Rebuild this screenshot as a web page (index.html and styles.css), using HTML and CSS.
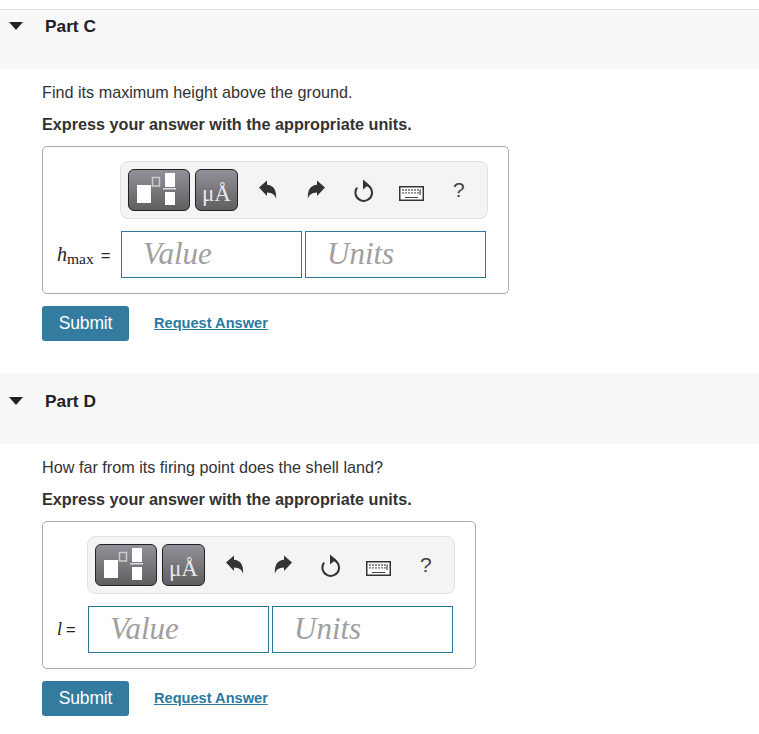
FILE: index.html
```html
<!DOCTYPE html>
<html lang="en">
<head>
<meta charset="utf-8">
<title>Parts</title>
<link rel="stylesheet" href="styles.css">
</head>
<body>
<svg class="defs" width="0" height="0" aria-hidden="true">
  <defs>
    <symbol id="undo" viewBox="0 0 18 19"><path d="M0 7.500 8 .5v4.300c5.500.3 9.800 3.800 9.100 14.200-1-4.400-4-6.500-9.100-6.600v3.700z"/></symbol>
    <symbol id="redo" viewBox="0 0 18 19"><path d="M18 7.500 10 .5v4.300C4.500 5.100.2 8.600.9 19c1-4.400 4-6.500 9.100-6.600v3.700z"/></symbol>
    <symbol id="reset" viewBox="0 0 20 23"><path d="M9.500 5.300a8.300 8.300 0 1 1-6.400 3.300" fill="none" stroke="#333" stroke-width="2"/><path d="M9 .5v10l6-5z" fill="#333"/></symbol>
    <symbol id="keys" viewBox="0 0 25 15"><rect x=".75" y=".75" width="23.500" height="13.500" fill="#fff" stroke="#333" stroke-width="1.500"/><path d="M3 4h19M3 6.800h19" stroke="#666" stroke-width="1.300" stroke-dasharray="2 1"/><path d="M21 4v5" stroke="#666" stroke-width="1.300"/><path d="M6 11.500h13" stroke="#444"/></symbol>
    <symbol id="templates" viewBox="0 0 62 42"><rect x="9" y="16" width="14" height="18" fill="#fff"/><rect x="24.500" y="8.500" width="7" height="8.500" fill="none" stroke="#ccc" stroke-width="1.500"/><rect x="37" y="4" width="10" height="14" fill="#fff"/><rect x="35" y="19" width="13" height="1.500" fill="#ddd"/><rect x="37" y="23" width="10" height="13" fill="#fff"/></symbol>
  </defs>
</svg>

<section class="part part-first">
  <header class="part-head part-head-first">
    <svg class="caret" viewBox="0 0 14 8"><path d="M0 0h14L7 8z"/></svg>
    <h2 class="part-title">Part C</h2>
  </header>
  <div class="part-body">
    <p class="prompt">Find its maximum height above the ground.</p>
    <p class="instruction">Express your answer with the appropriate units.</p>
    <div class="answer-box">
      <div class="toolbar">
        <span class="tool tool-templates"><svg class="tool-svg"><use href="#templates"/></svg></span>
        <span class="tool tool-symbols"><span class="mu">μÅ</span></span>
        <span class="icons">
          <svg class="ic ic-arrow"><use href="#undo"/></svg>
          <svg class="ic ic-arrow"><use href="#redo"/></svg>
          <svg class="ic ic-reset"><use href="#reset"/></svg>
          <svg class="ic ic-keys"><use href="#keys"/></svg>
          <span class="help">?</span>
        </span>
      </div>
      <div class="answer-row">
        <span class="label label-wide"><i class="var">h</i><sub class="sub">max</sub><span class="eq eq-wide">=</span></span>
        <span class="field">Value</span>
        <span class="field field-units">Units</span>
      </div>
    </div>
    <div class="actions">
      <button class="submit" type="button">Submit</button>
      <a class="request" href="#">Request Answer</a>
    </div>
  </div>
</section>

<section class="part">
  <header class="part-head">
    <svg class="caret" viewBox="0 0 14 8"><path d="M0 0h14L7 8z"/></svg>
    <h2 class="part-title">Part D</h2>
  </header>
  <div class="part-body">
    <p class="prompt">How far from its firing point does the shell land?</p>
    <p class="instruction">Express your answer with the appropriate units.</p>
    <div class="answer-box">
      <div class="toolbar">
        <span class="tool tool-templates"><svg class="tool-svg"><use href="#templates"/></svg></span>
        <span class="tool tool-symbols"><span class="mu">μÅ</span></span>
        <span class="icons">
          <svg class="ic ic-arrow"><use href="#undo"/></svg>
          <svg class="ic ic-arrow"><use href="#redo"/></svg>
          <svg class="ic ic-reset"><use href="#reset"/></svg>
          <svg class="ic ic-keys"><use href="#keys"/></svg>
          <span class="help">?</span>
        </span>
      </div>
      <div class="answer-row">
        <span class="label"><i class="var var-l">l</i><span class="eq">=</span></span>
        <span class="field">Value</span>
        <span class="field field-units">Units</span>
      </div>
    </div>
    <div class="actions">
      <button class="submit" type="button">Submit</button>
      <a class="request" href="#">Request Answer</a>
    </div>
  </div>
</section>
</body>
</html>
```
FILE: styles.css
```css
* { box-sizing: border-box; }
html, body { margin: 0; padding: 0; background: #fff; }
body {
  padding-top: 9px;
  font-family: "Liberation Sans", Arial, sans-serif;
  color: #333;
  font-size: 16.2px;
  overflow: hidden;
}
.defs { position: absolute; }
.part-first { border-top: 1px solid #e2e2e2; }
.part-head {
  height: 71px;
  background: #f8f8f8;
  display: flex;
  align-items: flex-start;
  padding-top: 19px;
}
.part-head-first { height: 59px; padding-top: 7px; }
.caret { width: 14px; height: 8px; margin: 5px 0 0 9px; fill: #222; flex: none; }
.part-title {
  margin: 0 0 0 22px;
  font-size: 17.300px;
  line-height: 18px;
  font-weight: 700;
  color: #222;
}
.part-body { padding: 14px 0 32px 42px; }
.prompt { margin: 0; line-height: 18px; height: 18px; }
.instruction { margin: 14px 0 13px; line-height: 18px; font-weight: 700; }
.answer-box {
  display: inline-flex;
  flex-direction: column;
  border: 1px solid #aaa;
  border-radius: 5px;
  padding: 14px 22px 15px 14px;
  vertical-align: top;
}
.toolbar {
  display: flex;
  align-items: center;
  align-self: flex-end;
  width: 368px;
  height: 58px;
  margin-right: -2px;
  padding-left: 7px;
  background: #f4f4f4;
  border: 1px solid #e2e2e2;
  border-radius: 8px;
}
.tool {
  display: flex;
  align-items: center;
  justify-content: center;
  height: 42px;
  border: 1px solid #222;
  border-radius: 6px;
  background: linear-gradient(#92919a, #5f5f60);
}
.tool-templates { width: 62px; }
.tool-symbols { width: 43px; margin-left: 5px; }
.tool-svg { width: 62px; height: 42px; display: block; flex: none; }
.mu {
  font-family: "Liberation Serif", serif;
  font-size: 23px;
  color: #e8e8e8;
  line-height: 1;
  padding-top: 6px;
}
.icons { display: flex; align-items: center; flex: 1; position: relative; height: 100%; }
.ic { display: block; position: absolute; fill: #333; }
.ic-arrow { width: 18px; height: 19px; top: 18px; }
.ic-arrow:nth-child(1) { left: 21px; }
.ic-arrow:nth-child(2) { left: 69px; }
.ic-reset { width: 20px; height: 23px; top: 17px; left: 116px; }
.ic-keys { width: 25px; height: 15px; top: 24px; left: 161px; }
.help { position: absolute; left: 215px; top: 16px; font-size: 21px; line-height: 24px; color: #444; }
.answer-row { display: flex; align-items: center; margin-top: 12px; }
.label {
  width: 31px;
  font-family: "Liberation Serif", serif;
  font-size: 17px;
  color: #222;
  white-space: nowrap;
  display: flex;
  align-items: baseline;
}
.label-wide { width: 64px; }
.var { font-size: 20px; }
.var-l { font-size: 18px; }
.sub { font-size: 15.500px; line-height: 1; vertical-align: baseline; position: relative; top: 3px; }
.eq { font-family: "Liberation Sans", sans-serif; font-size: 16.500px; margin-left: 4px; }
.eq-wide { margin-left: 7px; }
.field {
  width: 181px;
  height: 47px;
  border: 1px solid #2a7a9e;
  background: #fff;
  padding-left: 21px;
  font-family: "Liberation Serif", serif;
  font-style: italic;
  font-size: 31px;
  line-height: 44px;
  color: #a0a0a0;
}
.field-units { margin-left: 3px; }
.actions { display: flex; align-items: center; margin-top: 12px; }
.submit {
  width: 87px;
  height: 35px;
  padding: 0;
  border: 0;
  border-radius: 3px;
  background: #337ca0;
  color: #fff;
  font-family: "Liberation Sans", sans-serif;
  font-size: 17.500px;
  letter-spacing: -.2px;
}
.request {
  margin: 0 0 2px 25px;
  font-size: 14.600px;
  font-weight: 700;
  color: #2a7a9e;
  text-decoration: underline;
}
```
